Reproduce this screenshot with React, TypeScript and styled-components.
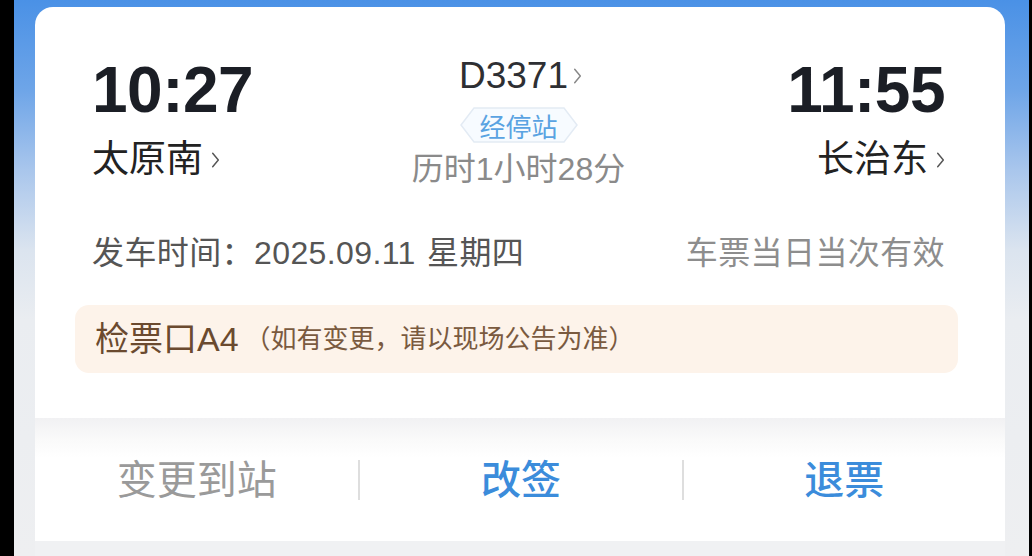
import React from "react";
import styled, { createGlobalStyle } from "styled-components";

const GlobalStyle = createGlobalStyle`
  html, body {
    margin: 0;
    padding: 0;
    background: #000;
    width: 1032px;
    height: 556px;
    overflow: hidden;
  }
  * { box-sizing: border-box; }
`;

const FONT = `"Liberation Sans", "Noto Sans CJK SC", sans-serif`;

const Screen = styled.div`
  margin-left: 14px;
  width: 1015px;
  height: 556px;
  padding: 7px 24px 0 21px;
  display: flex;
  background: linear-gradient(
    180deg,
    #4a91e6 0px,
    #6ea5e8 90px,
    #a9c6ec 170px,
    #dbe4ef 250px,
    #eaedf1 320px,
    #eeeff1 100%
  );
  font-family: ${FONT};
`;

const Card = styled.div`
  width: 970px;
  background: #fff;
  border-radius: 18px 18px 0 0;
  display: flex;
  flex-direction: column;
  overflow: hidden;
`;

const TopSection = styled.div`
  height: 411px;
  padding: 51px 60px 0 57px;
  display: flex;
  flex-direction: column;
`;

const TimesRow = styled.div`
  display: grid;
  grid-template-columns: 1fr auto 1fr;
  align-items: start;
`;

const Endpoint = styled.div<{ $align: "left" | "right" }>`
  display: flex;
  flex-direction: column;
  align-items: ${(p) => (p.$align === "left" ? "flex-start" : "flex-end")};
`;

const Time = styled.div`
  font-size: 64px;
  line-height: 64px;
  font-weight: 700;
  color: #1b1e25;
  letter-spacing: -0.5px;
`;

const Station = styled.div`
  margin-top: 16px;
  display: flex;
  align-items: center;
  gap: 8px;
  font-size: 37px;
  line-height: 44px;
  color: #222;
`;

const Middle = styled.div`
  display: flex;
  flex-direction: column;
  align-items: center;
  margin-top: -3px;
`;

const TrainNo = styled.div`
  display: flex;
  align-items: center;
  gap: 5px;
  font-size: 37px;
  line-height: 42px;
  color: #2e2f33;
  margin-left: 4px;
`;

const Badge = styled.div`
  position: relative;
  width: 118px;
  height: 36px;
  margin-top: 10px;
  display: flex;
  align-items: center;
  justify-content: center;
  font-size: 26px;
  color: #5aa3e2;
  svg {
    position: absolute;
    inset: 0;
  }
  span {
    position: relative;
  }
`;

const Duration = styled.div`
  margin-top: 6px;
  font-size: 32px;
  line-height: 40px;
  color: #8a8a8a;
`;

const InfoRow = styled.div`
  margin-top: 44px;
  display: flex;
  justify-content: space-between;
  align-items: center;
  font-size: 32px;
  line-height: 40px;
`;

const InfoText = styled.div<{ $muted?: boolean }>`
  color: ${(p) => (p.$muted ? "#8d8d8d" : "#555")};
  letter-spacing: 0.4px;
  word-spacing: 2px;
`;

const Notice = styled.div`
  margin: 32px -13px 0 -17px;
  height: 68px;
  border-radius: 14px;
  background: #fdf3ea;
  padding: 0 20px;
  display: flex;
  align-items: center;
  color: #6b4a2f;
`;

const NoticeMain = styled.span`
  font-size: 34px;
  line-height: 40px;
`;

const NoticeNote = styled.span`
  margin-left: 6px;
  font-size: 26px;
  line-height: 40px;
  color: #7a5a3f;
`;

const ActionBar = styled.div`
  height: 123px;
  display: grid;
  grid-template-columns: repeat(3, 1fr);
  align-items: center;
  background: linear-gradient(180deg, #f1f1f3 0px, #fafafa 22px, #fff 40px, #fff 100%);
`;

const Action = styled.div<{ $primary?: boolean; $divider?: boolean }>`
  height: 40px;
  display: flex;
  align-items: center;
  justify-content: center;
  font-size: 40px;
  line-height: 40px;
  font-weight: ${(p) => (p.$primary ? 500 : 400)};
  color: ${(p) => (p.$primary ? "#3b8cdb" : "#9a9a9a")};
  border-left: ${(p) => (p.$divider ? "2px solid #dedede" : "none")};
`;

const BottomStrip = styled.div`
  flex: 1;
  background: #f0f1f3;
`;

const Chevron = ({ color = "#666", h = 18 }: { color?: string; h?: number }) => (
  <svg width={h * 0.5} height={h} viewBox="0 0 8 16" fill="none">
    <polyline points="1.5,2 6.5,8 1.5,14" stroke={color} strokeWidth="1.3" strokeLinecap="round" strokeLinejoin="round" />
  </svg>
);

export default function App() {
  return (
    <>
      <GlobalStyle />
      <Screen>
        <Card>
          <TopSection>
            <TimesRow>
              <Endpoint $align="left">
                <Time>10:27</Time>
                <Station>
                  太原南
                  <Chevron color="#555" h={18} />
                </Station>
              </Endpoint>
              <Middle>
                <TrainNo>
                  D3371
                  <Chevron color="#888" h={18} />
                </TrainNo>
                <Badge>
                  <svg width="118" height="36" viewBox="0 0 118 36">
                    <polygon
                      points="14,1 104,1 117,18 104,35 14,35 1,18"
                      fill="#f7fbff"
                      stroke="#e3ebf4"
                      strokeWidth="1.5"
                    />
                  </svg>
                  <span>经停站</span>
                </Badge>
                <Duration>历时1小时28分</Duration>
              </Middle>
              <Endpoint $align="right">
                <Time>11:55</Time>
                <Station>
                  长治东
                  <Chevron color="#555" h={18} />
                </Station>
              </Endpoint>
            </TimesRow>
            <InfoRow>
              <InfoText>发车时间：2025.09.11 星期四</InfoText>
              <InfoText $muted>车票当日当次有效</InfoText>
            </InfoRow>
            <Notice>
              <NoticeMain>检票口A4</NoticeMain>
              <NoticeNote>（如有变更，请以现场公告为准）</NoticeNote>
            </Notice>
          </TopSection>
          <ActionBar>
            <Action>变更到站</Action>
            <Action $primary $divider>改签</Action>
            <Action $primary $divider>退票</Action>
          </ActionBar>
          <BottomStrip />
        </Card>
      </Screen>
    </>
  );
}
